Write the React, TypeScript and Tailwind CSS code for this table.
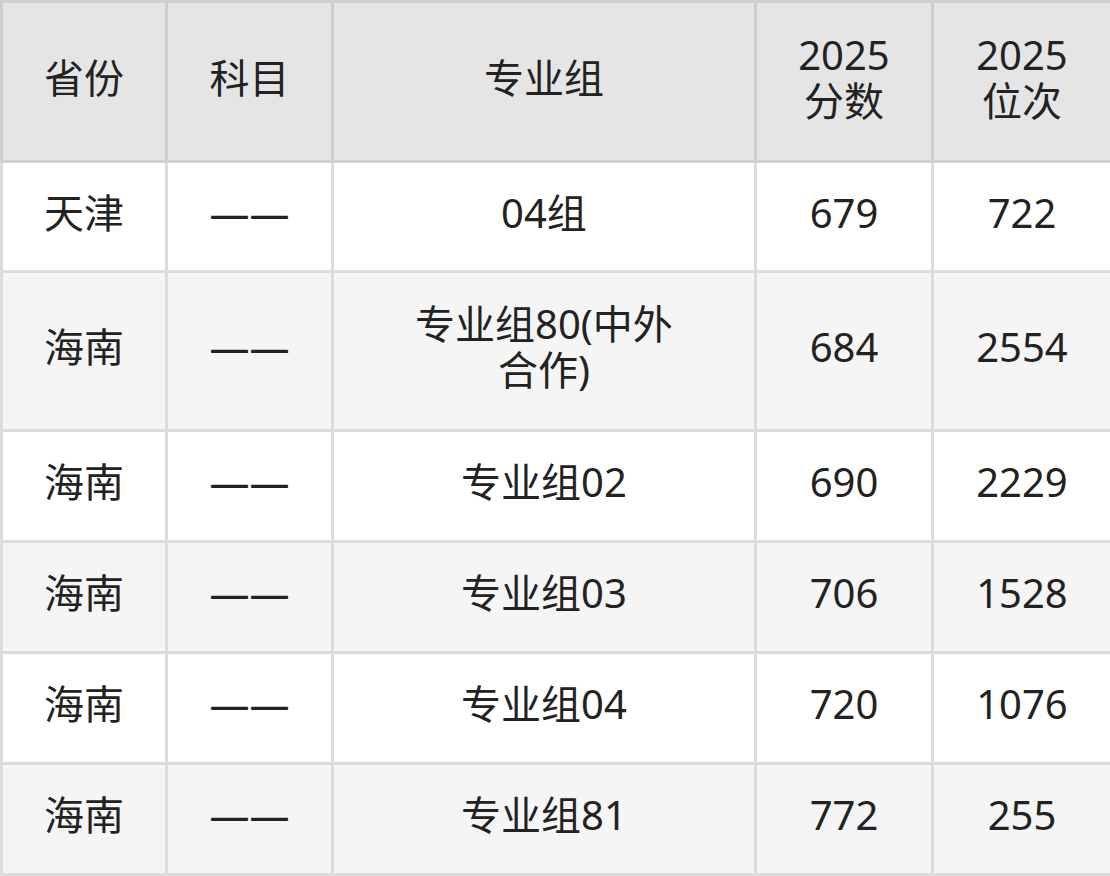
const rows = [
  { prov: '天津', subj: '——', group: '04组', score: '679', rank: '722', h: 'h-[110px]' },
  { prov: '海南', subj: '——', group: '专业组80(中外合作)', score: '684', rank: '2554', h: 'h-[159px]' },
  { prov: '海南', subj: '——', group: '专业组02', score: '690', rank: '2229', h: 'h-[111px]' },
  { prov: '海南', subj: '——', group: '专业组03', score: '706', rank: '1528', h: 'h-[111px]' },
  { prov: '海南', subj: '——', group: '专业组04', score: '720', rank: '1076', h: 'h-[111px]' },
  { prov: '海南', subj: '——', group: '专业组81', score: '772', rank: '255', h: 'h-[111px]' },
];

export default function App() {
  return (
    <div className="w-[1110px] h-[876px] bg-white overflow-hidden font-['Noto_Sans','Noto_Sans_CJK_SC',sans-serif] text-[#222] text-[40px] leading-[46px]">
      <table className="w-[1110px] table-fixed border-collapse">
        <colgroup>
          <col className="w-[165px]" />
          <col className="w-[166px]" />
          <col className="w-[423px]" />
          <col className="w-[177px]" />
          <col className="w-[179px]" />
        </colgroup>
        <thead>
          <tr className="h-[160px] bg-[#e5e5e5]">
            <th className="border-[3px] border-[#cfcfcf] font-normal text-center pb-[8px]">省份</th>
            <th className="border-[3px] border-[#cfcfcf] font-normal text-center pb-[8px]">科目</th>
            <th className="border-[3px] border-[#cfcfcf] font-normal text-center pb-[8px]">专业组</th>
            <th className="border-[3px] border-[#cfcfcf] font-normal text-center pb-[8px]">2025<br />分数</th>
            <th className="border-[3px] border-[#cfcfcf] font-normal text-center pb-[8px]">2025<br />位次</th>
          </tr>
        </thead>
        <tbody>
          {rows.map((r, i) => (
            <tr key={i} className={`${r.h} ${i % 2 === 1 ? 'bg-[#f5f5f5]' : 'bg-white'}`}>
              <td className="border-[3px] border-[#dcdcdc] text-center pb-[8px]">{r.prov}</td>
              <td className="border-[3px] border-[#dcdcdc] text-center pb-[8px]">{r.subj}</td>
              <td className="border-[3px] border-[#dcdcdc] text-center pb-[8px]">
                <div className="max-w-[280px] mx-auto">{r.group}</div>
              </td>
              <td className="border-[3px] border-[#dcdcdc] text-center pb-[8px]">{r.score}</td>
              <td className="border-[3px] border-[#dcdcdc] text-center pb-[8px]">{r.rank}</td>
            </tr>
          ))}
        </tbody>
      </table>
    </div>
  );
}
